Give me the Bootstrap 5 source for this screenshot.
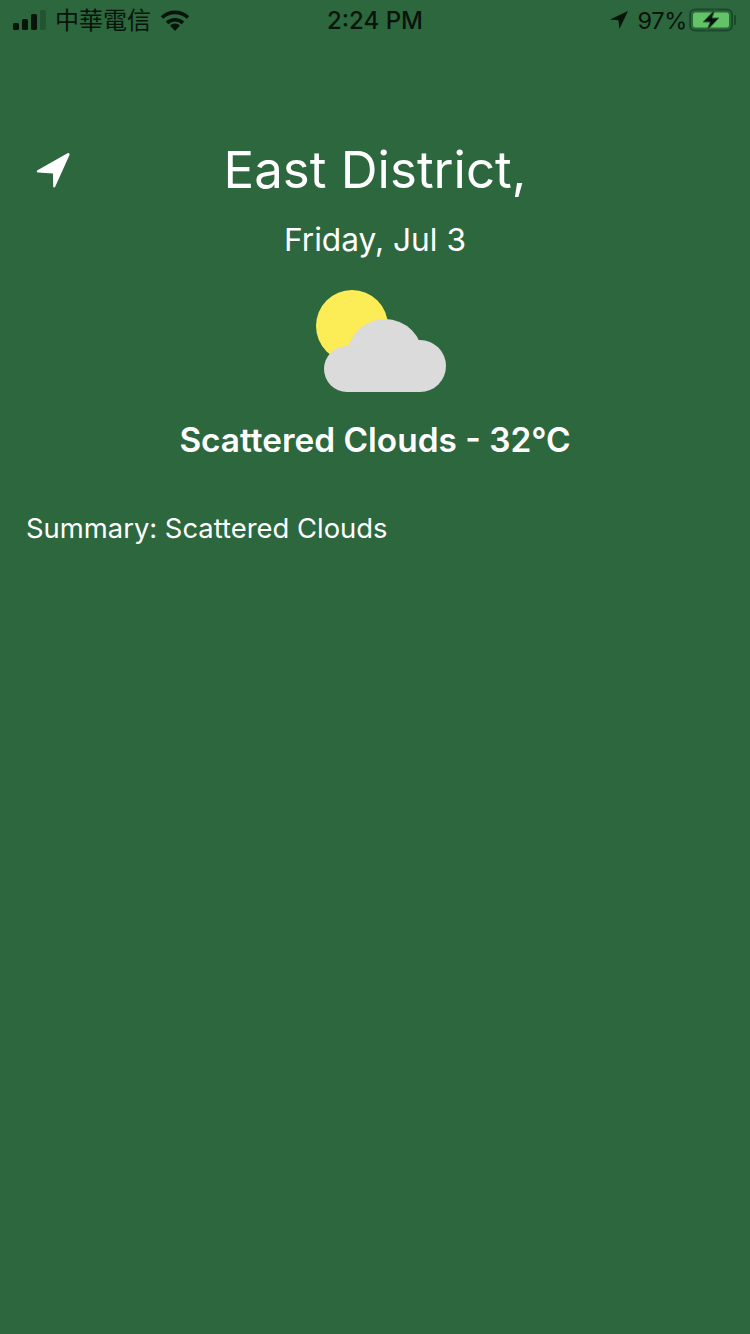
<!DOCTYPE html>
<html lang="en">
<head>
<meta charset="utf-8">
<title>Weather</title>
<link href="https://cdn.jsdelivr.net/npm/bootstrap@5.3.0/dist/css/bootstrap.min.css" rel="stylesheet">
<style>
html,body{height:100%}
body{background:#2d673e;color:#fff;font-family:Inter,"Noto Sans CJK TC",sans-serif;overflow:hidden}
.status-strip{height:40px;padding:0 13px;color:#07140b;font-size:23px;line-height:40px}
.status-side{flex:1 1 0;min-width:0}
.status-time{font-weight:500;font-size:24px;padding-top:1px}
.carrier{font-family:"Noto Sans CJK TC",sans-serif;font-size:24px;line-height:36px;margin-bottom:3px}
.pct{font-size:23.5px;letter-spacing:-.3px;padding-top:1px}
.batt-icon{margin-left:2px}
.hero{padding-top:100px}
.nav-arrow{left:34px;top:110px}
.city-title{font-size:51px;line-height:60px;font-weight:400;margin:0}
.date-line{font-size:31.7px;line-height:40px;margin:20px 0 0;font-weight:400}
.weather-art{display:block;margin-top:25px}
.cond-line{font-size:33.4px;line-height:40px;font-weight:600;margin:28px 0 0}
.summary-line{font-size:27.4px;line-height:32px;margin:52px 0 0;padding-left:26px}
</style>
</head>
<body>
<div class="status-strip d-flex align-items-center">
  <div class="status-side d-flex align-items-center">
    <svg width="34" height="22" viewBox="0 0 34 22" class="flex-shrink-0"><rect x="0" y="14" width="6" height="7" rx="1.5" fill="#07140b"/><rect x="9" y="10" width="6" height="11" rx="1.5" fill="#07140b"/><rect x="18" y="5" width="6" height="16" rx="1.5" fill="#07140b"/><rect x="27" y="1" width="6" height="20" rx="1.5" fill="#07140b" opacity=".22"/></svg>
    <span class="carrier ms-2">中華電信</span>
    <svg width="32" height="24" viewBox="0 0 32 24" class="ms-2 flex-shrink-0"><path d="M16 23l5-5.600a7.400 7.400 0 0 0-10 0z" fill="#07140b"/><path d="M3 9.500a19 19 0 0 1 26 0M8 14.800a12 12 0 0 1 16 0" fill="none" stroke="#07140b" stroke-width="3.600"/></svg>
  </div>
  <div class="status-time">2:24 PM</div>
  <div class="status-side d-flex align-items-center justify-content-end">
    <svg width="20" height="20" viewBox="0 0 20 20" class="flex-shrink-0"><path d="M19 1L1 9.500l8.500.8.900 8.700z" fill="#07140b"/></svg>
    <span class="pct ms-2">97%</span>
    <svg width="48" height="24" viewBox="0 0 48 24" class="flex-shrink-0 batt-icon"><rect x="1" y="1.500" width="42" height="21" rx="5" fill="none" stroke="#1a4a2a" stroke-width="2"/><rect x="4" y="4.500" width="36" height="15" rx="2.500" fill="#62c466"/><path d="M46 8v8" stroke="#1a4a2a" stroke-width="2" stroke-linecap="round"/><path d="M26 1.500L14 14h7l-3 8.500L30 10h-7z" fill="#07140b" stroke="#2d673e" stroke-width="1"/></svg>
  </div>
</div>
<main class="hero position-relative text-center">
  <svg class="nav-arrow position-absolute" width="38" height="40" viewBox="0 0 38 40"><path d="M33.500 3.200L3.500 20.200c-1.200.7-.8 2.200.4 2.300l15.100 1 .2 13c0 1.300 1.500 1.500 2 .3L35.500 5c.4-1.300-.9-2.400-2-1.800z" fill="#fff"/></svg>
  <h1 class="city-title">East District,</h1>
  <p class="date-line">Friday, Jul 3</p>
  <svg class="weather-art mx-auto" width="150" height="107" viewBox="-10 0 150 107">
    <circle cx="42" cy="41" r="36" fill="#fcec55"/>
    <g fill="#dbdbdb"><circle cx="37" cy="84" r="23"/><circle cx="75" cy="72" r="38"/><circle cx="110" cy="81" r="26"/><rect x="37" y="72" width="73" height="35"/></g>
  </svg>
  <p class="cond-line">Scattered Clouds - 32°C</p>
  <p class="summary-line text-start">Summary: Scattered Clouds</p>
</main>
<script src="https://cdn.jsdelivr.net/npm/bootstrap@5.3.0/dist/js/bootstrap.bundle.min.js"></script>
</body>
</html>
